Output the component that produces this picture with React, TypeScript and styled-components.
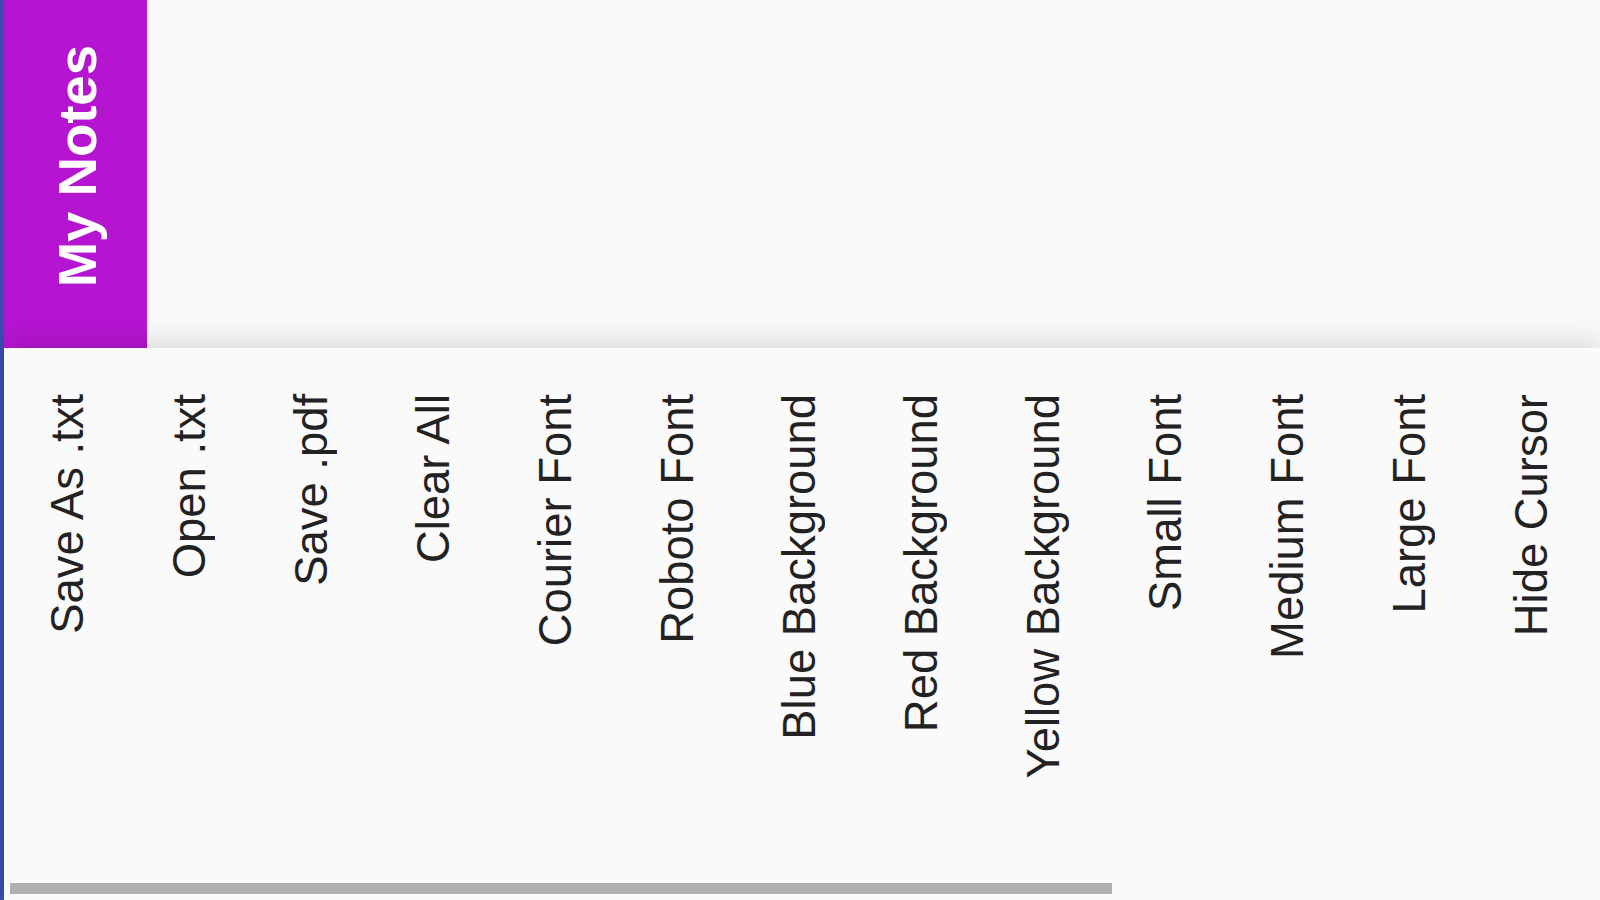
import React from "react";
import styled, { createGlobalStyle } from "styled-components";

const GlobalStyle = createGlobalStyle`
  html, body {
    margin: 0;
    padding: 0;
    height: 100%;
    overflow: hidden;
    background: #3a4db3;
  }
  #root {
    height: 100%;
  }
`;

// Layout

const Screen = styled.div`
  height: 100vh;
  margin-left: 4px;
  display: flex;
  flex-direction: column;
  background: #fafafa;
  font-family: "Liberation Sans", Arial, sans-serif;
`;

const Top = styled.div`
  height: 348px;
  display: flex;
  flex-direction: row;
  background: #f8f8f8;
`;

const Header = styled.div`
  width: 143px;
  background: #b515d1;
  display: flex;
  flex-direction: row;
  justify-content: center;
  align-items: flex-start;
  padding-top: 45px;
  box-sizing: border-box;
`;

const Title = styled.h1`
  margin: 0 0 0 3px;
  writing-mode: vertical-rl;
  transform: rotate(180deg);
  font-size: 54.5px;
  font-weight: 700;
  color: #ffffff;
  white-space: nowrap;
`;

const NoteArea = styled.textarea`
  flex: 1;
  border: none;
  outline: none;
  resize: none;
  margin: 0;
  padding: 12px;
  background: transparent;
  font-family: "Liberation Sans", Arial, sans-serif;
  font-size: 24px;
  color: #222;
`;

// Menu

const MenuPane = styled.div`
  position: relative;
  z-index: 1;
  flex: 1;
  display: flex;
  background: #fafafa;
  box-shadow: 0 -4px 26px rgba(0, 0, 0, 0.14);
`;

const Menu = styled.div`
  flex: 1;
  display: flex;
  flex-direction: row;
  align-items: flex-start;
  padding: 46px 0 0 3px;
  box-sizing: border-box;
  overflow: hidden;
`;

const ScrollThumb = styled.div`
  position: absolute;
  left: 6px;
  bottom: 6px;
  width: 1102px;
  height: 11px;
  background: #b0b0b0;
`;

const MenuItem = styled.button`
  flex: 0 0 122px;
  width: 122px;
  padding: 0;
  margin: 0;
  border: none;
  background: transparent;
  display: flex;
  flex-direction: row;
  justify-content: center;
  cursor: pointer;
`;

const ItemLabel = styled.span`
  writing-mode: vertical-rl;
  transform: rotate(180deg);
  font-family: "Liberation Sans", Arial, sans-serif;
  font-size: 45.4px;
  color: #222222;
  white-space: nowrap;
`;

const items = [
  "Save As .txt",
  "Open .txt",
  "Save .pdf",
  "Clear All",
  "Courier Font",
  "Roboto Font",
  "Blue Background",
  "Red Background",
  "Yellow Background",
  "Small Font",
  "Medium Font",
  "Large Font",
  "Hide Cursor",
];

export default function App() {
  return (
    <>
      <GlobalStyle />
      <Screen>
        <Top>
          <Header>
            <Title>My Notes</Title>
          </Header>
          <NoteArea spellCheck={false} />
        </Top>
        <MenuPane>
          <Menu>
            {items.map((label) => (
              <MenuItem key={label}>
                <ItemLabel>{label}</ItemLabel>
              </MenuItem>
            ))}
          </Menu>
          <ScrollThumb />
        </MenuPane>
      </Screen>
    </>
  );
}
